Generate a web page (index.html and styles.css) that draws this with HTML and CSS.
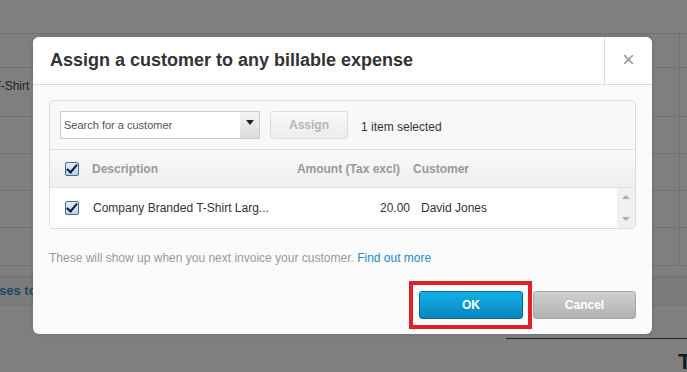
FILE: index.html
```html
<!DOCTYPE html>
<html lang="en">
<head>
    <meta charset="UTF-8">
    <title>Assign a customer</title>
    <link rel="stylesheet" href="styles.css">
</head>
<body>
    <div class="page">
        <div class="bg-row h35"></div>
        <div class="bg-row h49"></div>
        <div class="bg-row h38"><span class="bg-text">T-Shirt</span></div>
        <div class="bg-row h37"></div>
        <div class="bg-row h37"></div>
        <div class="bg-row h37"></div>
        <div class="bg-row h10"></div>
        <div class="bg-row h30 link-row"><span class="bg-link">ses to</span></div>
        <div class="bg-total"><span class="bg-big">T</span></div>
    </div>

    <div class="modal">
        <div class="modal-header">
            <h1>Assign a customer to any billable expense</h1>
            <div class="close">&times;</div>
        </div>
        <div class="modal-body">
            <div class="panel">
                <div class="toolbar">
                    <div class="search">
                        <span class="placeholder">Search for a customer</span>
                        <span class="drop"><span class="caret"></span></span>
                    </div>
                    <button class="btn-assign">Assign</button>
                    <span class="count">1 item selected</span>
                </div>
                <div class="grid head">
                    <span class="check"><span class="tick"></span></span>
                    <span class="desc">Description</span>
                    <span class="amount">Amount (Tax excl)</span>
                    <span class="cust">Customer</span>
                </div>
                <div class="grid row">
                    <span class="check"><span class="tick"></span></span>
                    <span class="desc">Company Branded T-Shirt Larg...</span>
                    <span class="amount">20.00</span>
                    <span class="cust">David Jones</span>
                    <span class="scroll"><span class="up"></span><span class="down"></span></span>
                </div>
            </div>
            <p class="note">These will show up when you next invoice your customer. <a href="#">Find out more</a></p>
            <div class="actions">
                <div class="highlight"><button class="btn-ok">OK</button></div>
                <button class="btn-cancel">Cancel</button>
            </div>
        </div>
    </div>
</body>
</html>
```

FILE: styles.css
```css
body {
    margin: 0;
    font-family: "Liberation Sans", Arial, sans-serif;
    background: #7f7f7f;
    width: 687px;
    height: 372px;
    overflow: hidden;
    position: relative;
}
.page {
    display: flex;
    flex-direction: column;
}
.bg-row {
    border-bottom: 1px solid #727272;
    box-sizing: border-box;
    position: relative;
    background: linear-gradient(to right, transparent 679px, #727272 679px, #727272 680px, transparent 680px);
}
.h35 { height: 34px; background: none; }
.h49 { height: 34px; }
.h38 { height: 49px; }
.h37 { height: 37px; }
.h10 { height: 38px; }
.h30 { height: 30px; border-top: 1px solid #727272; margin-top: 10px; background: #7b7b7b; }
.bg-text {
    position: absolute;
    left: -6px;
    top: 11px;
    font-size: 12px;
    color: #1f1f1f;
}
.bg-link {
    position: absolute;
    left: -1px;
    top: 6px;
    font-size: 13px;
    font-weight: bold;
    color: #1c4862;
}
.bg-total {
    margin-top: 32px;
    margin-left: 506px;
    border-top: 1px solid #222;
    height: 33px;
    position: relative;
}
.bg-big {
    position: absolute;
    left: 172px;
    top: 10px;
    font-size: 22px;
    font-weight: bold;
    color: #1a1a1a;
}

.modal {
    position: absolute;
    left: 33px;
    top: 37px;
    width: 619px;
    height: 297px;
    background: #fbfbfb;
    border-radius: 6px;
    overflow: hidden;
    box-shadow: 0 0 4px rgba(0, 0, 0, 0.15);
}
.modal-header {
    display: flex;
    height: 47px;
    background: #fff;
    border-bottom: 1px solid #dcdcdc;
}
.modal-header h1 {
    flex: 1;
    margin: 0;
    padding: 13px 0 0 17px;
    font-size: 18px;
    color: #333;
}
.close {
    width: 47px;
    border-left: 1px solid #dcdcdc;
    text-align: center;
    font-size: 22px;
    line-height: 45px;
    color: #999;
}
.modal-body {
    padding: 15px 16px 0 16px;
}
.panel {
    border: 1px solid #dcdcdc;
    border-radius: 4px;
    background: #f8f8f8;
    overflow: hidden;
}
.toolbar {
    display: flex;
    align-items: center;
    height: 48px;
    padding-left: 10px;
    border-bottom: 1px solid #dedede;
}
.search {
    display: flex;
    width: 200px;
    height: 28px;
    box-sizing: border-box;
    border: 1px solid #ccc;
    background: #fff;
}
.placeholder {
    flex: 1;
    font-size: 11px;
    color: #555;
    padding: 7px 0 0 3px;
}
.drop {
    width: 19px;
    background: linear-gradient(#f4f4f4, #dcdcdc);
    display: flex;
    justify-content: center;
    padding-top: 8px;
    box-sizing: border-box;
}
.caret {
    width: 0;
    height: 0;
    border-left: 4px solid transparent;
    border-right: 4px solid transparent;
    border-top: 5px solid #222;
}
.btn-assign {
    margin-left: 10px;
    width: 78px;
    height: 28px;
    border: 1px solid #ddd;
    border-radius: 3px;
    background: linear-gradient(#fafafa, #ececec);
    color: #b5b5b5;
    font-family: inherit;
    font-size: 12px;
    font-weight: bold;
}
.count {
    margin-left: 13px;
    font-size: 12px;
    color: #333;
    padding-top: 4px;
}
.grid {
    display: grid;
    align-items: center;
    font-size: 12px;
}
.head {
    grid-template-columns: 32px 180px 138px 1fr;
    height: 37px;
    background: linear-gradient(#fafafa, #eceeef);
    border-bottom: 1px solid #e2e2e2;
    color: #999;
    font-weight: bold;
}
.row {
    grid-template-columns: 32px 180px 148px 1fr 18px;
    height: 40px;
    background: #fff;
    color: #333;
}
.check {
    margin-left: 15px;
    width: 12px;
    height: 12px;
    border: 1px solid #4a6a94;
    border-radius: 2px;
    background: linear-gradient(#e3eefa, #b9d1ee);
    position: relative;
}
.tick {
    position: absolute;
    left: 3px;
    top: -1px;
    width: 4px;
    height: 9px;
    border-right: 2px solid #0b1a3a;
    border-bottom: 2px solid #0b1a3a;
    transform: rotate(40deg);
}
.desc {
    padding-left: 11px;
    white-space: nowrap;
}
.head .desc {
    padding-left: 10px;
}
.amount {
    text-align: right;
}
.head .cust {
    padding-left: 13px;
}
.row .cust {
    padding-left: 11px;
}
.scroll {
    grid-column: 5;
    height: 40px;
    background: #f0f0f0;
    display: flex;
    flex-direction: column;
    align-items: center;
    justify-content: space-between;
    padding: 7px 0;
    box-sizing: border-box;
}
.up {
    border-left: 4px solid transparent;
    border-right: 4px solid transparent;
    border-bottom: 4px solid #b0b0b0;
}
.down {
    border-left: 4px solid transparent;
    border-right: 4px solid transparent;
    border-top: 4px solid #b0b0b0;
}
.note {
    margin: 22px 0 0 0;
    font-size: 12px;
    color: #999;
}
.note a {
    color: #1c8ac4;
    text-decoration: none;
}
.actions {
    display: flex;
    justify-content: flex-end;
    align-items: center;
    margin-top: 16px;
}
.highlight {
    border: 4px solid #e0202a;
    padding: 6px 5px 6px 6px;
}
.actions button {
    height: 28px;
    border-radius: 3px;
    font-family: inherit;
    font-size: 12px;
    font-weight: bold;
    color: #fff;
}
.btn-ok {
    display: block;
    width: 104px;
    border: 1px solid #0a6a9a;
    background: linear-gradient(#15b0e5, #0686c0);
}
.btn-cancel {
    width: 103px;
    margin-left: 1px;
    border: 1px solid #a8a8a8;
    background: linear-gradient(#d0d0d0, #b0b0b0);
}
```
